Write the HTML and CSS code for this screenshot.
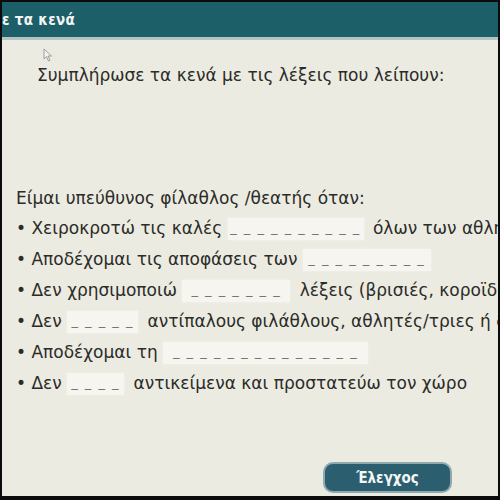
FILE: index.html
```html
<!DOCTYPE html>
<html lang="el">
<head>
<meta charset="utf-8">
<link rel="stylesheet" href="styles.css">
</head>
<body>
<div class="frame">
  <header class="topbar"><span class="title">ε τα κενά</span></header>
  <main class="content">
    <svg class="cursor" width="10" height="14" viewBox="0 0 10 14"><path d="M1 1 L1 11 L3.5 8.5 L5.5 13 L7 12.3 L5 8 L8.5 8 Z" fill="#f4f4f2" stroke="#8a8a88" stroke-width="0.8"/></svg>
    <p class="instr">Συμπλήρωσε τα κενά με τις λέξεις που λείπουν:</p>
    <p class="lead">Είμαι υπεύθυνος φίλαθλος /θεατής όταν:</p>
    <ul class="items">
      <li>• Χειροκροτώ τις καλές <span class="blank b1">_ _ _ _ _ _ _ _ _ _</span> όλων των αθλητών</li>
      <li>• Αποδέχομαι τις αποφάσεις των <span class="blank b2">_ _ _ _ _ _ _ _ _</span></li>
      <li>• Δεν χρησιμοποιώ <span class="blank b3">_ _ _ _ _ _ _</span> λέξεις (βρισιές, κοροϊδίες)</li>
      <li>• Δεν <span class="blank b4">_ _ _ _ _</span> αντίπαλους φιλάθλους, αθλητές/τριες ή διαιτητές</li>
      <li>• Αποδέχομαι τη <span class="blank b5">_ _ _ _ _ _ _ _ _ _ _ _ _ _</span></li>
      <li>• Δεν <span class="blank b6">_ _ _ _</span> αντικείμενα και προστατεύω τον χώρο</li>
    </ul>
    <div class="actions"><button class="check">Έλεγχος</button></div>
  </main>
</div>
</body>
</html>
```
FILE: styles.css
```css
html, body { margin: 0; padding: 0; }
body {
  background: #0b0b0b;
  width: 500px;
  height: 500px;
  overflow: hidden;
  font-family: "DejaVu Sans", sans-serif;
}
.frame {
  margin: 2px 2px 0 2px;
  height: 494px;
  background: #ecebe1;
  display: flex;
  flex-direction: column;
  overflow: hidden;
}
.topbar {
  height: 35px;
  background: #1c5f69;
  border-bottom: 3px solid #b4c4c5;
  display: flex;
  align-items: center;
  flex: none;
  margin-left: -2px;
}
.title {
  color: #f2f5f4;
  font-family: "DejaVu Sans Condensed", "DejaVu Sans", sans-serif;
  font-weight: bold;
  font-size: 15px;
  padding-left: 2px;
  letter-spacing: 0.3px;
}
.content {
  position: relative;
  flex: 1;
  display: flex;
  flex-direction: column;
  padding-left: 14px;
  color: #2b2b29;
  font-size: 17px;
  white-space: nowrap;
}
.cursor { position: absolute; left: 41px; top: 8px; }
.instr { margin: 25px 0 0 21px; }
.lead { margin: 103px 0 0 0; }
.items { list-style: none; margin: 9px 0 0 0; padding: 0; display: flex; flex-direction: column; gap: 8px; }
.items li { height: 23px; line-height: 23px; }
.blank {
  display: inline-block;
  height: 22px;
  line-height: 20px;
  background: #f6f5f0;
  color: #6d6d6a;
  font-size: 13px;
  letter-spacing: 1.5px;
  text-align: center;
  vertical-align: middle;
  margin: 0 4px 0 0;
  box-shadow: 0 0 2px #f6f5f0;
}
.b1 { width: 136px; }
.b2 { width: 128px; }
.b3 { width: 108px; }
.b4 { width: 71px; }
.b5 { width: 205px; }
.b6 { width: 57px; }
.actions { margin-top: auto; display: flex; justify-content: flex-end; padding: 0 46px 3px 0; }
.check {
  width: 129px;
  height: 31px;
  border-radius: 10px;
  background: #2b5f70;
  border: 2px solid #8fa9ae;
  color: #f4f6f5;
  font-family: "DejaVu Sans Condensed", "DejaVu Sans", sans-serif;
  font-weight: bold;
  font-size: 15px;
}
```
